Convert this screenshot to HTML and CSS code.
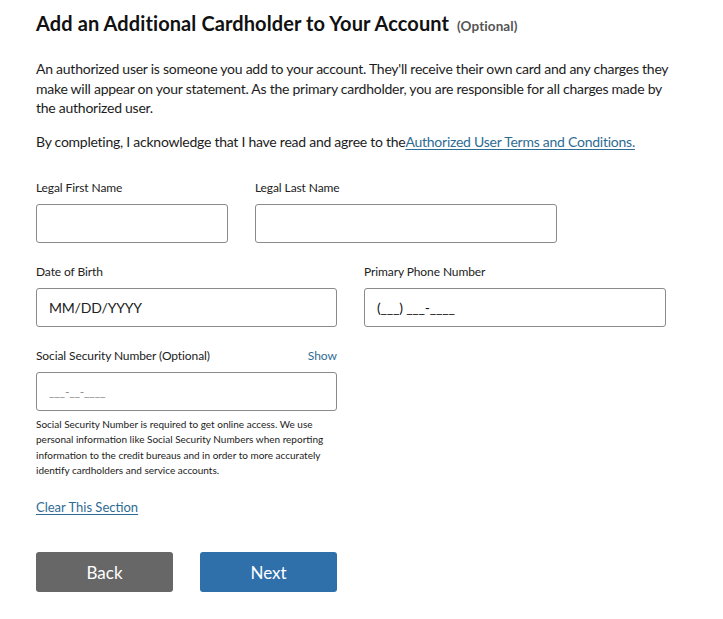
FILE: index.html
```html
<!DOCTYPE html>
<html lang="en">
<head>
<meta charset="utf-8">
<title>Add an Additional Cardholder</title>
<link rel="stylesheet" href="styles.css">
</head>
<body>
<main class="page">
  <h1 class="title">Add an Additional Cardholder to Your Account <span class="optional">(Optional)</span></h1>
  <p class="intro">An authorized user is someone you add to your account. They'll receive their own card and any charges they make will appear on your statement. As the primary cardholder, you are responsible for all charges made by the authorized user.</p>
  <p class="ack">By completing, I acknowledge that I have read and agree to the<a class="link" href="#">Authorized User Terms and Conditions.</a></p>

  <div class="row row-names">
    <div class="field">
      <label class="label">Legal First Name</label>
      <div class="input"></div>
    </div>
    <div class="field">
      <label class="label">Legal Last Name</label>
      <div class="input"></div>
    </div>
  </div>

  <div class="row row-two">
    <div class="field">
      <label class="label">Date of Birth</label>
      <div class="input"><span class="ph">MM/DD/YYYY</span></div>
    </div>
    <div class="field">
      <label class="label">Primary Phone Number</label>
      <div class="input"><span class="ph ph-mask">(___) ___-____</span></div>
    </div>
  </div>

  <div class="row row-two">
    <div class="field">
      <div class="label-line">
        <label class="label">Social Security Number (Optional)</label>
        <a class="show" href="#">Show</a>
      </div>
      <div class="input"><span class="ph ph-ssn">___-__-____</span></div>
      <p class="help">Social Security Number is required to get online access. We use personal information like Social Security Numbers when reporting information to the credit bureaus and in order to more accurately identify cardholders and service accounts.</p>
    </div>
  </div>

  <a class="clear" href="#">Clear This Section</a>

  <div class="buttons">
    <button class="btn btn-back" type="button">Back</button>
    <button class="btn btn-next" type="button">Next</button>
  </div>
</main>
</body>
</html>
```
FILE: styles.css
```css
* { box-sizing: border-box; }
html, body { margin: 0; padding: 0; background: #fff; }
body {
  font-family: "Lato", "Noto Sans", sans-serif;
  color: #1c1c1c;
}
.page {
  padding: 9px 36px 0 36px;
  width: 723px;
}
.title {
  margin: 0;
  font-size: 20px;
  line-height: 28px;
  font-weight: 700;
  color: #111;
  letter-spacing: 0.1px;
}
.optional {
  margin-left: 3px;
  font-size: 13.5px;
  font-weight: 700;
  color: #555;
  letter-spacing: 0.1px;
}
.intro {
  margin: 19px 0 0 0;
  font-size: 14px;
  line-height: 19.5px;
  letter-spacing: -0.25px;
  width: 640px;
}
.ack {
  margin: 14px 0 0 0;
  font-size: 14px;
  line-height: 19.5px;
  letter-spacing: -0.25px;
}
.link {
  color: #2f6c93;
  text-decoration: underline;
  text-underline-offset: 2px;
}
.row {
  display: grid;
  column-gap: 27px;
}
.row-names {
  margin-top: 29px;
  grid-template-columns: 192px 302px;
}
.row-two {
  margin-top: 21px;
  grid-template-columns: 301px 302px;
}
.field { display: flex; flex-direction: column; }
.label {
  display: block;
  font-size: 12px;
  line-height: 16px;
  color: #222;
  letter-spacing: -0.1px;
}
.label-line {
  display: flex;
  justify-content: space-between;
  align-items: baseline;
}
.show {
  font-size: 12px;
  line-height: 16px;
  color: #2f6c93;
  text-decoration: none;
}
.input {
  margin-top: 8px;
  height: 39px;
  border: 1px solid #8a8a8a;
  border-radius: 3px;
  display: flex;
  align-items: center;
  padding-left: 12px;
}
.ph {
  font-size: 14px;
  color: #222;
  letter-spacing: -0.2px;
}
.ph-mask { color: #111; }
.ph-ssn { color: #888; font-size: 12px; }
.help {
  margin: 6px 0 0 0;
  font-size: 10px;
  line-height: 15.3px;
  color: #222;
  width: 300px;
}
.clear {
  display: inline-block;
  margin-top: 20px;
  font-size: 13px;
  line-height: 18px;
  color: #2f6c93;
  text-decoration: underline;
  text-underline-offset: 2px;
}
.buttons {
  display: flex;
  gap: 27px;
  margin-top: 36px;
}
.btn {
  width: 137px;
  height: 40px;
  border: none;
  border-radius: 3px;
  color: #fff;
  font-family: "Lato", "Noto Sans", sans-serif;
  font-size: 17px;
  cursor: pointer;
}
.btn-back { background: #676767; }
.btn-next { background: #2f70ab; }
```
